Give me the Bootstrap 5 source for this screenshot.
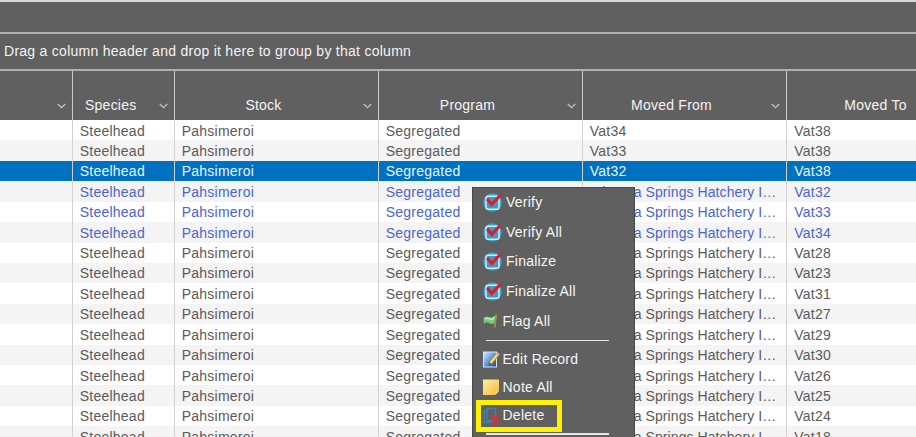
<!DOCTYPE html>
<html lang="en">
<head>
<meta charset="utf-8">
<meta name="viewport" content="width=device-width, initial-scale=1">
<title>Fish movement records</title>
<link href="https://cdn.jsdelivr.net/npm/bootstrap@5.3.0/dist/css/bootstrap.min.css" rel="stylesheet">
<style>
body{font-family:"Liberation Sans",Arial,sans-serif;font-size:14px;letter-spacing:.24px;line-height:20px;color:#5a5a5a;background:#fff;height:437px}
.bar{background:#606060;color:#f4f4f4;border-top:2px solid #b0b0b0}
.bar-top{height:32px;border-top-color:#d9d9d9}
.bar-group{height:37px;padding:7px 0 0 4px;letter-spacing:.27px}
.grid-line{display:grid;grid-template-columns:73px 102px 204px 204px 204px 129px}
.head-line{height:51px}
.head-line>div{border-right:1px solid #c9c9c9;padding:0 12px 5px 12px}
.head-line>div:last-child{border:0;padding-right:0;padding-left:48px}
.head-line .head-mid{padding-right:26px}
.head-line>div svg{margin:0 -6px 6px -3px}
.record{height:20.43px}
.record>div{border-right:1px solid #d2d2d2;padding-left:6.7px;padding-top:.5px;white-space:nowrap;overflow:hidden}
.record>div:last-child{border:0;padding-left:7.3px}
.record .origin-long{letter-spacing:.08px;padding-left:9px}
.record:nth-child(even){background:#f4f4f4}
.record.pending{color:#4b64cf}
.record.picked{background:#0070c0;color:#e8f5ff}
.ctx{left:472px;top:187px;width:163px;height:250px;background:#606060;color:#f6f6f6;border:1px solid #484848;border-bottom:0}
.ctx-item{height:28px;padding-left:9.5px}
.ctx-item svg{flex:none}
.ctx-tall{height:29.8px}
.ctx-first{margin-top:-1px}
.check-item svg{margin-right:3.5px}
.ctx-rule{height:1.5px;background:#e4e4e4;width:123px;margin-left:13px}
.marker{border:5px solid #fff200;width:86px;height:32px;margin:-1px 0 1px 3px;padding-left:1.5px}
.marker svg{flex:none}
.marker span{margin-top:-2px}
</style>
<script src="https://cdn.jsdelivr.net/npm/bootstrap@5.3.0/dist/js/bootstrap.bundle.min.js"></script>
</head>
<body class="position-relative overflow-hidden">
<svg width="0" height="0" class="position-absolute">
  <defs>
    <linearGradient id="gNote" x2="1" y2="1"><stop stop-color="#fff0a0"/><stop offset="1" stop-color="#f5ba38"/></linearGradient>
    <linearGradient id="gEdit" x2="1" y2="1"><stop stop-color="#d8ecff"/><stop offset=".5" stop-color="#5d9be0"/><stop offset="1" stop-color="#173f94"/></linearGradient>
    <symbol id="check" viewBox="0 0 20 20"><circle cx="9.5" cy="10.5" r="9.2" fill="#2ea9d6"/><rect x="3" y="4.3" width="13" height="13" rx="2" fill="#4b95b8" stroke="#c9f1fc" stroke-width="1.5"/><path d="M4.2 7 8.7 12.3 17.6 3.2" fill="none" stroke="#d81f30" stroke-width="3.2"/></symbol>
    <symbol id="chev" viewBox="0 0 9 6"><path d="M.8 1 4.5 4.6 8.2 1" fill="none" stroke="#c4c4c4" stroke-width="1.3"/></symbol>
  </defs>
</svg>
<div class="d-flex flex-column">
  <div class="bar bar-top"></div>
  <div class="bar bar-group">Drag a column header and drop it here to group by that column</div>
  <div class="bar grid-line head-line" id="heads"></div>
  <div id="records"></div>
</div>
<div class="ctx position-absolute overflow-hidden">
  <div class="ctx-item ctx-tall ctx-first check-item d-flex align-items-center"><svg width="20" height="20"><use href="#check"/></svg>Verify</div>
  <div class="ctx-item ctx-tall check-item d-flex align-items-center"><svg width="20" height="20"><use href="#check"/></svg>Verify All</div>
  <div class="ctx-item ctx-tall check-item d-flex align-items-center"><svg width="20" height="20"><use href="#check"/></svg>Finalize</div>
  <div class="ctx-item ctx-tall check-item d-flex align-items-center"><svg width="20" height="20"><use href="#check"/></svg>Finalize All</div>
  <div class="ctx-item ctx-tall d-flex align-items-center"><svg width="20" height="18" viewBox="0 0 20 18"><path d="M.5 6Q3 3.5 6 5T13 3L11.5 11Q9 13 6 11T1 12Z" fill="#72c977"/><path d="M2 7Q5 5.5 7 7T12 5" fill="none" stroke="#b4edae" stroke-width="1.6"/><path d="M13.3 2.5 11.7 15.5" stroke="#ad8752" stroke-width="1.8"/></svg>Flag All</div>
  <div class="ctx-rule my-1"></div>
  <div class="ctx-item d-flex align-items-center"><svg width="20" height="18" viewBox="0 0 20 18"><rect x=".5" y="2" width="13" height="15" fill="url(#gEdit)" stroke="#d6e2f0"/><path d="m6 15 1-4 6.5-8 2.5 2-6.5 8Z" fill="#ffd45a" stroke="#8b6729" stroke-width=".6"/><path d="m12.6 4 1.6-2 2.4 2-1.5 2Z" fill="#eeb092"/><path d="m6 15 .5-2 1.5 1Z" fill="#333"/></svg>Edit Record</div>
  <div class="ctx-item d-flex align-items-center"><svg width="20" height="18" viewBox="0 0 20 18"><path d="M0 1.5H16V13L12 17H0Z" fill="url(#gNote)"/><path d="M12 17V13H16Z" fill="#fff5ca" stroke="#cf9834" stroke-width=".5"/></svg>Note All</div>
  <div class="marker d-flex align-items-center"><svg width="20" height="18" viewBox="0 0 20 18"><path d="M4 1.5H12.5V14H4ZM4 4H1V15.5H9V14" fill="none" stroke="#3f83ad" stroke-width="1.5"/><path d="m8.5 9.5 6.5 7m.5-7.5-7 8" stroke="#f02632" stroke-width="2.5"/></svg><span>Delete</span></div>
  <div class="ctx-rule"></div>
</div>
<script>
const headings = ["", "Species", "Stock", "Program", "Moved From", "Moved To"];
document.getElementById("heads").innerHTML = headings.map((h, i) =>
  `<div class="d-flex align-items-end"><span class="${i === 1 ? "me-auto" : "flex-grow-1 text-center"} ${i > 1 && i < 5 ? "head-mid" : ""} text-nowrap">${h}</span>${i < 5 ? '<svg width="9" height="6"><use href="#chev"/></svg>' : ""}</div>`).join("");
const vats = [38, 38, 38, 32, 33, 34, 28, 23, 31, 27, 29, 30, 26, 25, 24, 18];
document.getElementById("records").innerHTML = vats.map((v, i) => {
  const state = i === 2 ? "picked" : i > 2 && i < 6 ? "pending" : "";
  const from = i < 3 ? "Vat" + (34 - i) : "Niagara Springs Hatchery I…";
  return `<div class="grid-line record ${state}"><div></div><div>Steelhead</div><div>Pahsimeroi</div><div>Segregated</div><div class="${i < 3 ? "" : "origin-long"}">${from}</div><div>Vat${v}</div></div>`;
}).join("");
</script>
</body>
</html>
